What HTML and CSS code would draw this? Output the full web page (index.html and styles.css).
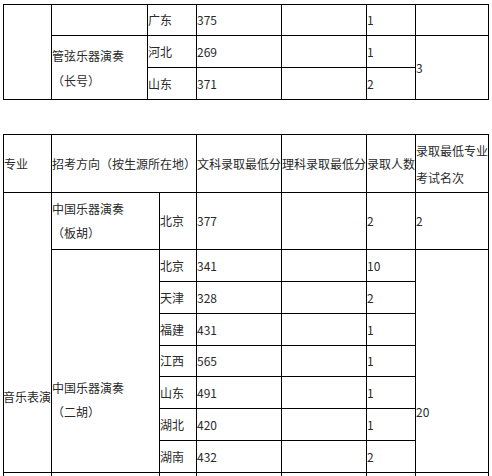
FILE: index.html
```html
<!DOCTYPE html>
<html lang="zh">
<head>
<meta charset="utf-8">
<title>录取分数</title>
<link rel="stylesheet" href="styles.css">
</head>
<body>
<div class="page">
  <div class="grid grid-top">
    <div class="c rs3"></div>
    <div class="c"></div>
    <div class="c">广东</div>
    <div class="c">375</div>
    <div class="c"></div>
    <div class="c">1</div>
    <div class="c"></div>
    <div class="c rs2 lh25">管弦乐器演奏<br>（长号）</div>
    <div class="c">河北</div>
    <div class="c">269</div>
    <div class="c"></div>
    <div class="c">1</div>
    <div class="c rs2">3</div>
    <div class="c">山东</div>
    <div class="c">371</div>
    <div class="c"></div>
    <div class="c">2</div>
  </div>

  <div class="grid grid-main">
    <div class="c">专业</div>
    <div class="c cs2">招考方向（按生源所在地）</div>
    <div class="c">文科录取最低分</div>
    <div class="c">理科录取最低分</div>
    <div class="c">录取人数</div>
    <div class="c lh27">录取最低专业<br>考试名次</div>

    <div class="c rs8 major">音乐表演</div>
    <div class="c">中国乐器演奏<br>（板胡）</div>
    <div class="c">北京</div>
    <div class="c">377</div>
    <div class="c"></div>
    <div class="c">2</div>
    <div class="c">2</div>

    <div class="c rs7 erhu">中国乐器演奏<br>（二胡）</div>
    <div class="c">北京</div>
    <div class="c">341</div>
    <div class="c"></div>
    <div class="c">10</div>
    <div class="c rs7 rank">20</div>

    <div class="c">天津</div>
    <div class="c">328</div>
    <div class="c"></div>
    <div class="c">2</div>

    <div class="c">福建</div>
    <div class="c">431</div>
    <div class="c"></div>
    <div class="c">1</div>

    <div class="c">江西</div>
    <div class="c">565</div>
    <div class="c"></div>
    <div class="c">1</div>

    <div class="c">山东</div>
    <div class="c">491</div>
    <div class="c"></div>
    <div class="c">1</div>

    <div class="c">湖北</div>
    <div class="c">420</div>
    <div class="c"></div>
    <div class="c">1</div>

    <div class="c">湖南</div>
    <div class="c">432</div>
    <div class="c"></div>
    <div class="c">2</div>

    <div class="c"></div>
    <div class="c"></div>
    <div class="c"></div>
    <div class="c"></div>
    <div class="c"></div>
    <div class="c"></div>
    <div class="c"></div>
  </div>
</div>
</body>
</html>
```

FILE: styles.css
```css
html, body {
  margin: 0;
  padding: 0;
  background: #ffffff;
}

.page {
  padding: 4px 0 0 3px;
  font-family: "Noto Sans CJK SC", "Noto Sans", sans-serif;
  font-size: 12px;
  line-height: 24px;
  color: #2a2a2a;
}

.grid {
  display: grid;
  width: 486px;
  box-sizing: border-box;
  border-left: 1px solid #000;
  border-top: 1px solid #000;
}

.grid-top {
  grid-template-columns: 48px 96px 49px 85px 85px 49px 73px;
  grid-template-rows: 31px 32px 32px;
}

.grid-main {
  margin-top: 34px;
  grid-template-columns: 48px 108px 37px 85px 85px 49px 73px;
  grid-template-rows: 58px 57px 32px 32px 32px 31px 32px 32px 32px 32px;
}

.c {
  box-sizing: border-box;
  border-right: 1px solid #000;
  border-bottom: 1px solid #000;
  display: flex;
  align-items: center;
  white-space: nowrap;
  padding: 0;
  overflow: visible;
}

.rs2 { grid-row: span 2; }
.rs3 { grid-row: span 3; }
.rs7 { grid-row: span 7; }
.rs8 { grid-row: span 8; }
.cs2 { grid-column: span 2; }

.lh25 { line-height: 25px; }
.lh27 { line-height: 27px; }

.major {
  padding-top: 129px;
  margin-left: -1px;
}

.erhu {
  padding-top: 78px;
}

.rank {
  padding-top: 102px;
}
```
